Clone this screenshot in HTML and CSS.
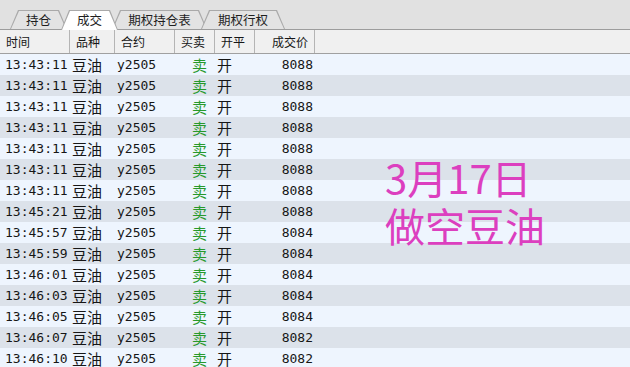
FILE: index.html
```html
<!DOCTYPE html>
<html lang="zh-CN">
<head>
    <meta charset="UTF-8">
    <title>成交</title>
    <link rel="stylesheet" href="styles.css">
</head>
<body>
    <div class="panel">
        <div class="tabs">
            <div class="tab">持仓</div>
            <div class="tab active">成交</div>
            <div class="tab wide">期权持仓表</div>
            <div class="tab">期权行权</div>
        </div>

        <div class="grid">
            <div class="row head">
                <div class="c c1">时间</div>
                <div class="c c2">品种</div>
                <div class="c c3">合约</div>
                <div class="c c4">买卖</div>
                <div class="c c5">开平</div>
                <div class="c c6">成交价</div>
                <div class="c c7"></div>
            </div>
            <div id="rows"></div>

            <div class="note">
                <div>3月17日</div>
                <div>做空豆油</div>
            </div>
        </div>
    </div>

    <script>
        const trades = [
            ['13:43:11', '8088'], ['13:43:11', '8088'], ['13:43:11', '8088'],
            ['13:43:11', '8088'], ['13:43:11', '8088'], ['13:43:11', '8088'],
            ['13:43:11', '8088'], ['13:45:21', '8088'], ['13:45:57', '8084'],
            ['13:45:59', '8084'], ['13:46:01', '8084'], ['13:46:03', '8084'],
            ['13:46:05', '8084'], ['13:46:07', '8082'], ['13:46:10', '8082']
        ];
        const box = document.getElementById('rows');
        trades.forEach(function (t) {
            const row = document.createElement('div');
            row.className = 'row';
            row.innerHTML =
                '<div class="c c1">' + t[0] + '</div>' +
                '<div class="c c2 cjk">豆油</div>' +
                '<div class="c c3">y2505</div>' +
                '<div class="c c4 cjk sell">卖</div>' +
                '<div class="c c5 cjk">开</div>' +
                '<div class="c c6">' + t[1] + '</div>' +
                '<div class="c c7"></div>';
            box.appendChild(row);
        });
    </script>
</body>
</html>
```

FILE: styles.css
```css
body {
    margin: 0;
    background: #eef5fe;
    font-family: "Noto Sans CJK SC", sans-serif;
    color: #1e1e1e;
    overflow: hidden;
}

.panel {
    width: 630px;
    height: 367px;
    overflow: hidden;
}

/* tab strip */
.tabs {
    display: flex;
    align-items: flex-end;
    height: 30px;
    padding-left: 10px;
    background: #e1e1e1;
    border-bottom: 1px solid #9c9c9c;
    box-sizing: border-box;
}

.tab {
    position: relative;
    height: 19px;
    width: 57px;
    margin-right: -6px;
    font-size: 12.5px;
    line-height: 20px;
    text-align: center;
    z-index: 1;
}

.tab.wide {
    width: 95px;
}

.tab:last-child {
    width: 84px;
}

.tab::before,
.tab::after {
    content: "";
    position: absolute;
    inset: 0;
    z-index: -1;
    clip-path: polygon(0 100%, 8px 0, calc(100% - 8px) 0, 100% 100%);
}

.tab::before {
    background: #a9a9a9;
}

.tab::after {
    inset: 1px 1px 0 1px;
    background: #e3e3e3;
}

.tab.active {
    z-index: 2;
    height: 20px;
    margin-bottom: -1px;
}

.tab.active::after {
    background: #ffffff;
}

/* table */
.grid {
    position: relative;
}

.row {
    display: grid;
    grid-template-columns: 70px 45px 60px 40px 40px 60px 1fr;
    height: 21px;
    font-family: "DejaVu Sans Mono", "Noto Sans CJK SC", monospace;
    font-size: 13px;
    line-height: 22px;
    color: #161616;
    background: #eef5fe;
}

#rows .row:nth-child(even) {
    background: #dce2ea;
}

.c {
    white-space: nowrap;
    overflow: hidden;
}

.cjk {
    font-family: "Noto Sans CJK SC", sans-serif;
    font-size: 15px;
    line-height: 21px;
}

.row.head {
    height: 24px;
    line-height: 23px;
    background: #f0f0f0;
    border-bottom: 1px solid #a0a0a0;
    box-sizing: border-box;
    font-family: "Noto Sans CJK SC", sans-serif;
    font-size: 12px;
}

.head .c {
    border-right: 1px solid #b4b4b4;
    padding-left: 6px;
}

.head .c7 {
    border-right: none;
}

.head .c6 {
    text-align: right;
    padding-right: 6px;
}

.c1 { padding-left: 5px; }
.c2 { padding-left: 2px; }
.c3 { padding-left: 2px; }
.c4 { padding-left: 17px; }
.c5 { padding-left: 2px; }
.c6 { text-align: right; padding-right: 2px; }

.sell {
    color: #26992a;
}

.note {
    position: absolute;
    left: 385px;
    top: 123px;
    font-size: 40px;
    line-height: 48px;
    color: #dc3fbf;
}
```
